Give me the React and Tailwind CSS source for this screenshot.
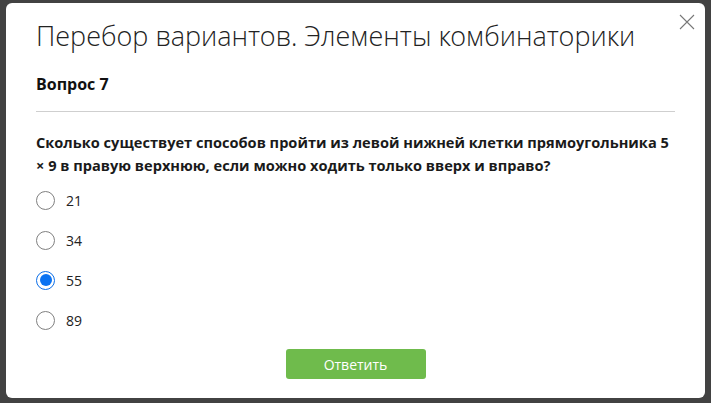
import React, { useState } from 'react';

const options = ['21', '34', '55', '89'];

function Radio({ checked }) {
  return (
    <span
      className={
        'flex h-[19px] w-[19px] shrink-0 items-center justify-center rounded-full border bg-white ' +
        (checked ? 'border-[#0b6ee8]' : 'border-[#808080]')
      }
    >
      {checked && <span className="h-[12px] w-[12px] rounded-full bg-[#0b73f2]" />}
    </span>
  );
}

export default function App() {
  const [answer, setAnswer] = useState('55');

  return (
    <div
      className="flex h-[403px] w-[711px] overflow-hidden bg-[#424242] px-[6px] pt-[3px] pb-[5px]"
      style={{ fontFamily: '"Open Sans", "Noto Sans", sans-serif' }}
    >
      <div className="relative flex flex-1 flex-col rounded-[6px] bg-white px-[30px] pt-[16px]">
        <button className="absolute right-[9px] top-[10px] text-[#777]">
          <svg width="18" height="18" viewBox="0 0 18 18" fill="none" stroke="currentColor" strokeWidth="1.1">
            <path d="M2 2L16 16M16 2L2 16" />
          </svg>
        </button>

        <h1
          className="text-[27px] font-light leading-[34px] text-[#222]"
          style={{ fontFamily: '"Open Sans Light", "Open Sans", sans-serif' }}
        >
          Перебор вариантов. Элементы комбинаторики
        </h1>
        <h2 className="mt-[20px] text-[16px] font-bold leading-[22px] text-[#111]">Вопрос 7</h2>

        <div className="mt-[16px] h-px bg-[#cfcfcf]" />

        <p className="mt-[19px] text-[14.6px] font-bold leading-[23px] text-[#1a1a1a]">
          Сколько существует способов пройти из левой нижней клетки прямоугольника 5 × 9 в правую верхнюю, если можно
          ходить только вверх и вправо?
        </p>

        <div className="mt-[13px] flex flex-col gap-[20px]">
          {options.map((o) => (
            <label key={o} className="flex h-[20px] cursor-pointer items-center gap-[11px]" onClick={() => setAnswer(o)}>
              <Radio checked={answer === o} />
              <span className="text-[14px] text-[#222]">{o}</span>
            </label>
          ))}
        </div>

        <div className="mt-[19px] flex justify-center">
          <button className="h-[30px] w-[140px] rounded-[3px] bg-[#6fbb4c] text-[14px] text-white">Ответить</button>
        </div>
      </div>
    </div>
  );
}
